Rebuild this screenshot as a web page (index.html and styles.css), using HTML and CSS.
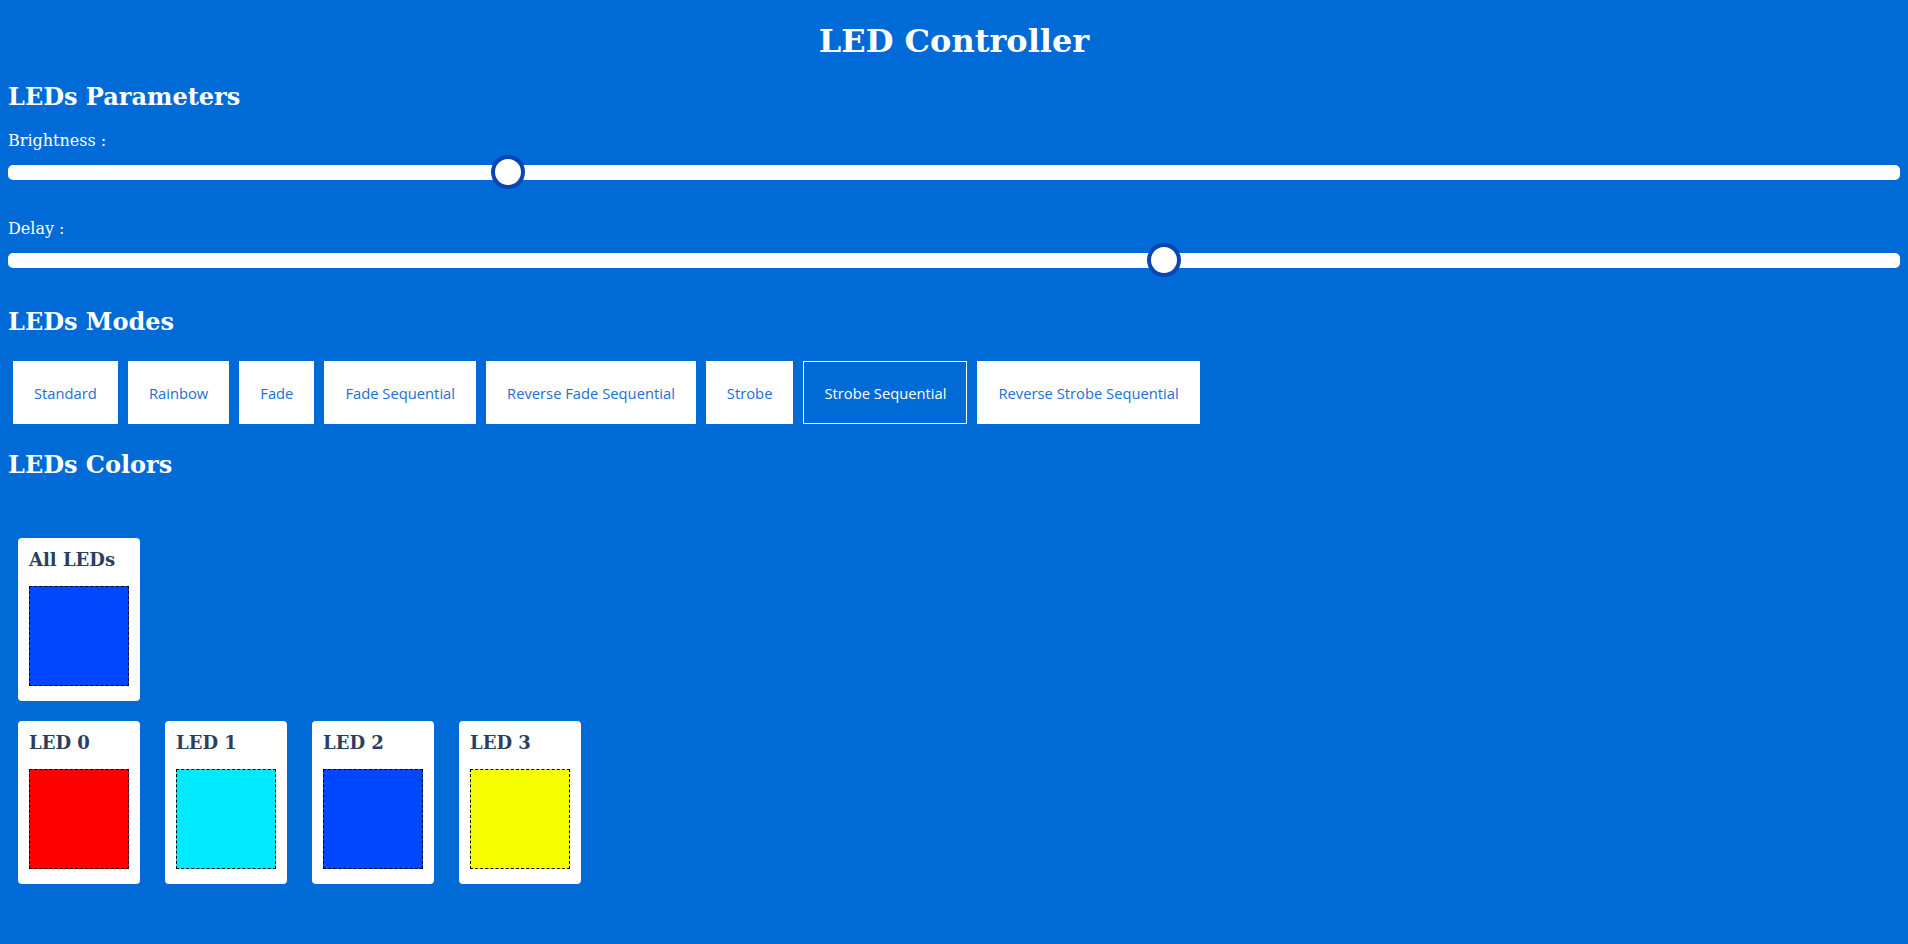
FILE: index.html
```html
<!DOCTYPE html>
<html lang="en">
<head>
<meta charset="utf-8">
<title>LED Controller</title>
<link rel="stylesheet" href="styles.css">
</head>
<body>
<div class="page">
  <h1 class="title">LED Controller</h1>

  <h2 class="section-title params-title">LEDs Parameters</h2>
  <div class="param">
    <label class="param-label" for="brightness">Brightness :</label>
    <input class="slider" id="brightness" type="range" min="0" max="1000" value="260">
  </div>
  <div class="param param-delay">
    <label class="param-label" for="delay">Delay :</label>
    <input class="slider" id="delay" type="range" min="0" max="1000" value="613">
  </div>

  <h2 class="section-title modes-title">LEDs Modes</h2>
  <div class="modes">
    <button class="mode">Standard</button>
    <button class="mode">Rainbow</button>
    <button class="mode">Fade</button>
    <button class="mode">Fade Sequential</button>
    <button class="mode">Reverse Fade Sequential</button>
    <button class="mode">Strobe</button>
    <button class="mode mode-active">Strobe Sequential</button>
    <button class="mode">Reverse Strobe Sequential</button>
  </div>

  <h2 class="section-title colors-title">LEDs Colors</h2>
  <div class="cards cards-all">
    <div class="card">
      <h3 class="card-title">All LEDs</h3>
      <div class="swatch swatch-blue"></div>
    </div>
  </div>
  <div class="cards cards-leds">
    <div class="card">
      <h3 class="card-title">LED 0</h3>
      <div class="swatch swatch-red"></div>
    </div>
    <div class="card">
      <h3 class="card-title">LED 1</h3>
      <div class="swatch swatch-cyan"></div>
    </div>
    <div class="card">
      <h3 class="card-title">LED 2</h3>
      <div class="swatch swatch-blue"></div>
    </div>
    <div class="card">
      <h3 class="card-title">LED 3</h3>
      <div class="swatch swatch-yellow"></div>
    </div>
  </div>
</div>
</body>
</html>
```

FILE: styles.css
```css
html, body {
  margin: 0;
  padding: 0;
  background: #006ad6;
}

body {
  font-family: "DejaVu Serif", serif;
  color: #ffffff;
  min-height: 944px;
}

.page {
  padding: 0 8px;
  display: flex;
  flex-direction: column;
}

.title {
  margin: 23px 0 0;
  font-size: 32px;
  line-height: 37px;
  font-weight: bold;
  text-align: center;
}

.section-title {
  margin: 0;
  font-size: 24px;
  line-height: 28px;
  font-weight: bold;
}

.params-title { margin-top: 23px; }

.param {
  display: flex;
  flex-direction: column;
  margin-top: 20px;
}

.param-delay { margin-top: 30px; }

.param-label {
  font-size: 16px;
  line-height: 19px;
}

.slider {
  -webkit-appearance: none;
  appearance: none;
  width: 100%;
  height: 34px;
  margin: 5px 0 0;
  padding: 0;
  background: transparent;
}

.slider::-webkit-slider-runnable-track {
  height: 15px;
  background: #ffffff;
  border-radius: 5px;
}

.slider::-webkit-slider-thumb {
  -webkit-appearance: none;
  appearance: none;
  box-sizing: border-box;
  width: 34px;
  height: 34px;
  margin-top: -9.5px;
  border: 4.5px solid #0b45b2;
  border-radius: 50%;
  background: #ffffff;
}

.modes-title { margin-top: 31px; }

.modes {
  display: flex;
  flex-wrap: wrap;
  gap: 10px;
  margin: 25px 0 0 5px;
}

.mode {
  box-sizing: border-box;
  height: 63px;
  padding: 0 20px;
  border: 1px solid #ffffff;
  border-radius: 0;
  background: #ffffff;
  color: #1a6fd6;
  font-family: "Open Sans", "Noto Sans", sans-serif;
  font-size: 14.75px;
}

.mode-active {
  background: transparent;
  color: #ffffff;
}

.colors-title { margin-top: 27px; }

.cards {
  display: flex;
  gap: 25px;
  margin-left: 10px;
}

.cards-all { margin-top: 59px; }
.cards-leds { margin-top: 20px; }

.card {
  box-sizing: border-box;
  width: 122px;
  padding: 11px 11px 15px;
  background: #ffffff;
  border-radius: 4px;
  display: flex;
  flex-direction: column;
}

.card-title {
  margin: 0 0 16px;
  font-size: 18px;
  line-height: 21px;
  font-weight: bold;
  color: #2c3e5e;
}

.swatch {
  box-sizing: border-box;
  width: 100px;
  height: 100px;
  border: 1px dashed #000000;
}

.swatch-blue { background: #0048ff; }
.swatch-red { background: #ff0000; }
.swatch-cyan { background: #00eaff; }
.swatch-yellow { background: #f5ff00; }
```
